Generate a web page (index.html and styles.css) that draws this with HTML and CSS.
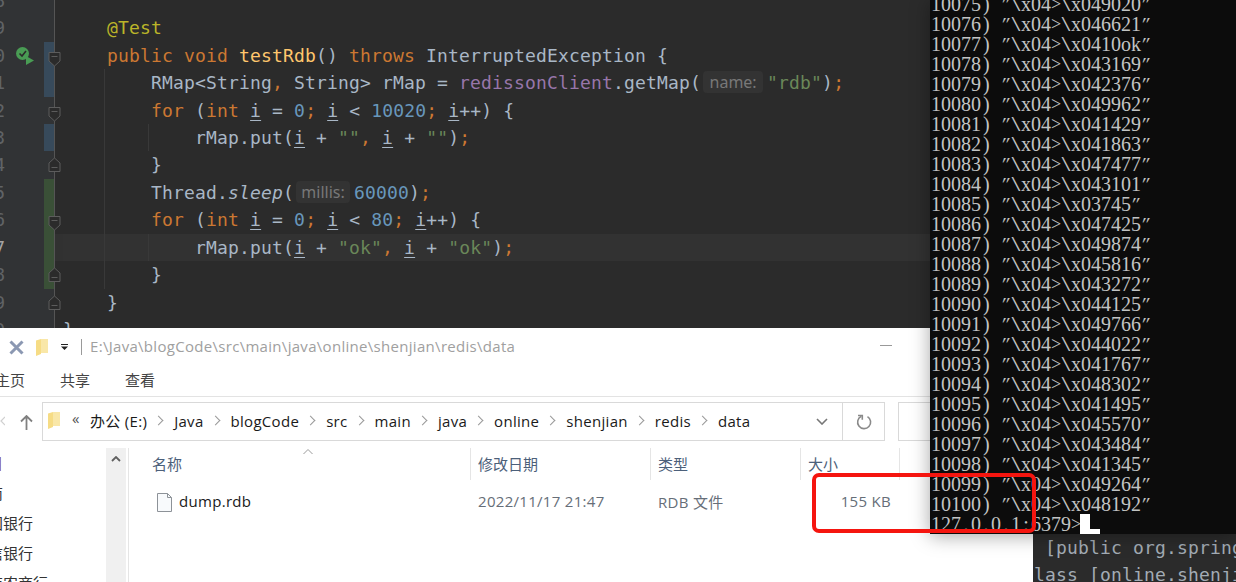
FILE: index.html
```html
<!DOCTYPE html>
<html lang="zh-CN">
<head>
<meta charset="utf-8">
<title>dump.rdb</title>
<link rel="stylesheet" href="styles.css">
</head>
<body>
<div class="desk">

<section class="win ide">
  <div class="row"><div class="gut"><span class="num">8</span></div><div class="gap"></div><code class="code"></code></div>
  <div class="row"><div class="gut"><span class="num">9</span></div><div class="gap"></div><code class="code">    <span class="a">@Test</span></code></div>
  <div class="row"><div class="gut blue"><span class="num">0</span>
      <svg class="run" viewBox="0 0 18 18"><circle cx="6.5" cy="6.5" r="6.5" fill="#499c54"/><path d="M3.5 6.5l2.5 2.5 4-5" fill="none" stroke="#2b2b2b" stroke-width="1.6"/><path d="M10 9l8 4.5-8 4.5z" fill="#499c54"/></svg>
      <svg class="fold fd" viewBox="0 0 13 15"><path d="M1 .5h11v8.500l-5.500 5-5.500-5z" fill="#2b2b2b" stroke="#5c5c5c"/><path d="M3.500 4.500h6" stroke="#5c5c5c"/></svg>
    </div><div class="gap"></div><code class="code">    <span class="k">public void</span> <span class="m">testRdb</span>() <span class="k">throws</span> InterruptedException {</code></div>
  <div class="row"><div class="gut blue"><span class="num">1</span></div><div class="gap"></div><code class="code g1">        RMap&lt;String<span class="k">,</span> String&gt; rMap = <span class="f">redissonClient</span>.getMap(<span class="hint hname">name:</span><span class="s">"rdb"</span>)<span class="k">;</span></code></div>
  <div class="row"><div class="gut"><span class="num">2</span>
      <svg class="fold fd" viewBox="0 0 13 15"><path d="M1 .5h11v8.500l-5.500 5-5.500-5z" fill="#2b2b2b" stroke="#5c5c5c"/><path d="M3.500 4.500h6" stroke="#5c5c5c"/></svg>
    </div><div class="gap"></div><code class="code g1">        <span class="k">for</span> (<span class="k">int</span> <u>i</u> = <span class="n">0</span><span class="k">;</span> <u>i</u> &lt; <span class="n">10020</span><span class="k">;</span> <u>i</u>++) {</code></div>
  <div class="row"><div class="gut blue"><span class="num">3</span></div><div class="gap"></div><code class="code g2">            rMap.put(<u>i</u> + <span class="s">""</span><span class="k">,</span> <u>i</u> + <span class="s">""</span>)<span class="k">;</span></code></div>
  <div class="row"><div class="gut"><span class="num">4</span>
      <svg class="fold fu" viewBox="0 0 13 15"><path d="M1 14.500h11v-8.500l-5.500-5-5.500 5z" fill="#2b2b2b" stroke="#5c5c5c"/><path d="M3.500 10.500h6" stroke="#5c5c5c"/></svg>
    </div><div class="gap"></div><code class="code g1">        }</code></div>
  <div class="row"><div class="gut green"><span class="num">5</span></div><div class="gap"></div><code class="code g1">        Thread.<em>sleep</em>(<span class="hint hmillis">millis:</span><span class="n">60000</span>)<span class="k">;</span></code></div>
  <div class="row"><div class="gut green"><span class="num">6</span>
      <svg class="fold fd" viewBox="0 0 13 15"><path d="M1 .5h11v8.500l-5.500 5-5.500-5z" fill="#2b2b2b" stroke="#5c5c5c"/><path d="M3.500 4.500h6" stroke="#5c5c5c"/></svg>
    </div><div class="gap"></div><code class="code g1">        <span class="k">for</span> (<span class="k">int</span> <u>i</u> = <span class="n">0</span><span class="k">;</span> <u>i</u> &lt; <span class="n">80</span><span class="k">;</span> <u>i</u>++) {</code></div>
  <div class="row"><div class="gut green"><span class="num cur">7</span></div><div class="gap gapcur"></div><code class="code g2 caret">            rMap.put(<u>i</u> + <span class="s">"ok"</span><span class="k">,</span> <u>i</u> + <span class="s">"ok"</span>)<span class="k">;</span></code></div>
  <div class="row"><div class="gut green"><span class="num">8</span>
      <svg class="fold fu" viewBox="0 0 13 15"><path d="M1 14.500h11v-8.500l-5.500-5-5.500 5z" fill="#2b2b2b" stroke="#5c5c5c"/><path d="M3.500 10.500h6" stroke="#5c5c5c"/></svg>
    </div><div class="gap"></div><code class="code g1">        }</code></div>
  <div class="row"><div class="gut"><span class="num">9</span>
      <svg class="fold fu" viewBox="0 0 13 15"><path d="M1 14.500h11v-8.500l-5.500-5-5.500 5z" fill="#2b2b2b" stroke="#5c5c5c"/><path d="M3.500 10.500h6" stroke="#5c5c5c"/></svg>
    </div><div class="gap"></div><code class="code">    }</code></div>
  <div class="row"><div class="gut"><span class="num">0</span></div><div class="gap"></div><code class="code">}</code></div>
</section>

<section class="win explorer">
  <header class="titlebar">
    <svg class="ic-x" viewBox="0 0 15 15"><path d="M1.500 1.500l12 12M13.500 1.500l-12 12" stroke="#8b98b2" stroke-width="3"/></svg>
    <svg class="ic-folder" viewBox="0 0 12 17"><path d="M0 1.500l5-1.500h7v14h-7v1l-5 2z" fill="#f6dc85"/><path d="M5 0v14h7v-14z" fill="#f9e7a8"/></svg>
    <svg class="ic-drop" viewBox="0 0 7 6"><path d="M0 0h7v1h-7zM0 2.500h7l-3.500 3.500z" fill="#222"/></svg>
    <span class="sep"></span>
    <span class="path">E:\Java\blogCode\src\main\java\online\shenjian\redis\data</span>
    <span class="min"></span>
  </header>
  <nav class="tabs"><span class="tab t1">主页</span><span class="tab">共享</span><span class="tab">查看</span></nav>
  <div class="addr-row">
    <svg class="ic-back" viewBox="0 0 5 10"><path d="M5 1l-4 4 4 4" fill="none" stroke="#d0d0d0" stroke-width="1.200"/></svg>
    <svg class="ic-up" viewBox="0 0 13 15"><path d="M6.500 15v-14M1 6.500l5.500-5.500 5.500 5.500" fill="none" stroke="#808080" stroke-width="1.800"/></svg>
    <div class="addr">
      <div class="crumbs">
        <svg class="ic-folder2" viewBox="0 0 12 17"><path d="M0 1.500l5-1.500h7v14h-7v1l-5 2z" fill="#f6dc85"/><path d="M5 0v14h7v-14z" fill="#f9e7a8"/></svg>
        <span class="more">«</span>
        <span class="c0">办公 (E:)</span><i class="cv"></i><span>Java</span><i class="cv"></i><span>blogCode</span><i class="cv"></i><span>src</span><i class="cv"></i><span>main</span><i class="cv"></i><span>java</span><i class="cv"></i><span>online</span><i class="cv"></i><span>shenjian</span><i class="cv"></i><span>redis</span><i class="cv"></i><span>data</span>
      </div>
      <svg class="ic-chev" viewBox="0 0 12 7"><path d="M1 1l5 5 5-5" fill="none" stroke="#777" stroke-width="1.600"/></svg>
      <div class="refresh"><svg viewBox="0 0 16 16" width="16" height="16"><path d="M5.300 2.300a6.500 6.500 0 1 0 6.200 .3" fill="none" stroke="#8a8a8a" stroke-width="1.600"/><path d="M2 1.500h4.300v4.300" fill="none" stroke="#8a8a8a" stroke-width="1.600"/></svg></div>
    </div>
    <div class="search"></div>
  </div>
  <div class="main">
    <aside class="side">
      <div class="tree"><div class="red">项目</div><div>指南</div><div>中国银行</div><div>中信银行</div><div>上海农商行</div></div>
      <div class="scroll"><svg viewBox="0 0 10 6" width="10" height="6"><path d="M1 5l4-4 4 4" fill="none" stroke="#606060" stroke-width="1.800"/></svg></div>
    </aside>
    <div class="list">
      <div class="th th1">名称<svg class="sort" viewBox="0 0 10 6"><path d="M.5 5l4.500-4.500 4.500 4.500" fill="none" stroke="#9a9a9a"/></svg></div>
      <div class="th">修改日期</div>
      <div class="th">类型</div>
      <div class="th">大小</div>
      <div class="td td1"><svg class="ic-file" viewBox="0 0 15 19"><path d="M.5.5h10l4 4v14h-14z" fill="#f8fafc" stroke="#8d9298"/><path d="M10.500.5v4h4" fill="none" stroke="#8d9298"/></svg><span>dump.rdb</span></div>
      <div class="td">2022/11/17 21:47</div>
      <div class="td">RDB 文件</div>
      <div class="td tr">155 KB</div>
    </div>
  </div>
</section>

<section class="win console">
  <code class="cline"> [public org.spring</code>
  <code class="cline">lass [online.shenji</code>
</section>

<section class="win term">
  <div class="r">10075<i class="p">)</i><i class="q">"</i><i class="b">\</i>x04<i class="g">&gt;</i><i class="b">\</i>x049020<i class="q">"</i></div>
  <div class="r">10076<i class="p">)</i><i class="q">"</i><i class="b">\</i>x04<i class="g">&gt;</i><i class="b">\</i>x046621<i class="q">"</i></div>
  <div class="r">10077<i class="p">)</i><i class="q">"</i><i class="b">\</i>x04<i class="g">&gt;</i><i class="b">\</i>x0410ok<i class="q">"</i></div>
  <div class="r">10078<i class="p">)</i><i class="q">"</i><i class="b">\</i>x04<i class="g">&gt;</i><i class="b">\</i>x043169<i class="q">"</i></div>
  <div class="r">10079<i class="p">)</i><i class="q">"</i><i class="b">\</i>x04<i class="g">&gt;</i><i class="b">\</i>x042376<i class="q">"</i></div>
  <div class="r">10080<i class="p">)</i><i class="q">"</i><i class="b">\</i>x04<i class="g">&gt;</i><i class="b">\</i>x049962<i class="q">"</i></div>
  <div class="r">10081<i class="p">)</i><i class="q">"</i><i class="b">\</i>x04<i class="g">&gt;</i><i class="b">\</i>x041429<i class="q">"</i></div>
  <div class="r">10082<i class="p">)</i><i class="q">"</i><i class="b">\</i>x04<i class="g">&gt;</i><i class="b">\</i>x041863<i class="q">"</i></div>
  <div class="r">10083<i class="p">)</i><i class="q">"</i><i class="b">\</i>x04<i class="g">&gt;</i><i class="b">\</i>x047477<i class="q">"</i></div>
  <div class="r">10084<i class="p">)</i><i class="q">"</i><i class="b">\</i>x04<i class="g">&gt;</i><i class="b">\</i>x043101<i class="q">"</i></div>
  <div class="r">10085<i class="p">)</i><i class="q">"</i><i class="b">\</i>x04<i class="g">&gt;</i><i class="b">\</i>x03745<i class="q">"</i></div>
  <div class="r">10086<i class="p">)</i><i class="q">"</i><i class="b">\</i>x04<i class="g">&gt;</i><i class="b">\</i>x047425<i class="q">"</i></div>
  <div class="r">10087<i class="p">)</i><i class="q">"</i><i class="b">\</i>x04<i class="g">&gt;</i><i class="b">\</i>x049874<i class="q">"</i></div>
  <div class="r">10088<i class="p">)</i><i class="q">"</i><i class="b">\</i>x04<i class="g">&gt;</i><i class="b">\</i>x045816<i class="q">"</i></div>
  <div class="r">10089<i class="p">)</i><i class="q">"</i><i class="b">\</i>x04<i class="g">&gt;</i><i class="b">\</i>x043272<i class="q">"</i></div>
  <div class="r">10090<i class="p">)</i><i class="q">"</i><i class="b">\</i>x04<i class="g">&gt;</i><i class="b">\</i>x044125<i class="q">"</i></div>
  <div class="r">10091<i class="p">)</i><i class="q">"</i><i class="b">\</i>x04<i class="g">&gt;</i><i class="b">\</i>x049766<i class="q">"</i></div>
  <div class="r">10092<i class="p">)</i><i class="q">"</i><i class="b">\</i>x04<i class="g">&gt;</i><i class="b">\</i>x044022<i class="q">"</i></div>
  <div class="r">10093<i class="p">)</i><i class="q">"</i><i class="b">\</i>x04<i class="g">&gt;</i><i class="b">\</i>x041767<i class="q">"</i></div>
  <div class="r">10094<i class="p">)</i><i class="q">"</i><i class="b">\</i>x04<i class="g">&gt;</i><i class="b">\</i>x048302<i class="q">"</i></div>
  <div class="r">10095<i class="p">)</i><i class="q">"</i><i class="b">\</i>x04<i class="g">&gt;</i><i class="b">\</i>x041495<i class="q">"</i></div>
  <div class="r">10096<i class="p">)</i><i class="q">"</i><i class="b">\</i>x04<i class="g">&gt;</i><i class="b">\</i>x045570<i class="q">"</i></div>
  <div class="r">10097<i class="p">)</i><i class="q">"</i><i class="b">\</i>x04<i class="g">&gt;</i><i class="b">\</i>x043484<i class="q">"</i></div>
  <div class="r">10098<i class="p">)</i><i class="q">"</i><i class="b">\</i>x04<i class="g">&gt;</i><i class="b">\</i>x041345<i class="q">"</i></div>
  <div class="r">10099<i class="p">)</i><i class="q">"</i><i class="b">\</i>x04<i class="g">&gt;</i><i class="b">\</i>x049264<i class="q">"</i></div>
  <div class="r">10100<i class="p">)</i><i class="q">"</i><i class="b">\</i>x04<i class="g">&gt;</i><i class="b">\</i>x048192<i class="q">"</i></div>
  <div class="r">127<i>.</i>0<i>.</i>0<i>.</i>1<i>:</i>6379<i class="g">&gt;</i><span class="cursor"></span></div>
</section>

<div class="mark"></div>
</div>
</body>
</html>
```
FILE: styles.css
```css
* { box-sizing: border-box; }
html, body { margin: 0; padding: 0; }
body { width: 1236px; height: 582px; overflow: hidden; background: #2b2b2b; }
.desk { position: relative; width: 1236px; height: 582px; overflow: hidden; }
.win { position: absolute; overflow: hidden; }

/* IDE */
.ide { left: 0; top: 0; width: 935px; height: 328px; background: #2b2b2b; padding-top: 0; }
.row { display: flex; height: 27.45px; margin-bottom: 0; }
.row:first-child { margin-top: -13.150px; }
.gut { position: relative; flex: none; width: 55px; height: 100%; background: #313335; border-right: 1px solid #555; display: flex; }
.blue::after, .green::after { content: ""; position: absolute; left: 44px; top: 0; width: 10px; height: 100%; }
.blue::after { background: #374a5b; }
.green::after { background: #3a5037; }
.num { width: 5px; overflow: hidden; display: flex; justify-content: flex-end; font: 18px/27.45px "DejaVu Sans Mono", monospace; color: #606366; }
.num.cur { color: #a4a3a3; }
.run { position: absolute; left: 16px; top: 5px; width: 18px; height: 18px; }
.fold { position: absolute; left: 48px; width: 13px; height: 15px; z-index: 2; }
.fd { top: 10px; }
.fu { top: 6px; }
.gap { flex: none; width: 8px; background: #2b2b2b; }
.gapcur { background: #313131; }
.code { flex: 1; min-width: 0; display: block; white-space: pre; font: 18px/27.45px "DejaVu Sans Mono", monospace; letter-spacing: .164px; color: #a9b7c6; background: #2b2b2b; }
.g1 { background-image: linear-gradient(#393939, #393939); background-size: 1px 100%; background-repeat: no-repeat; background-position: 41px 0; }
.g2 { background-image: linear-gradient(#393939, #393939), linear-gradient(#393939, #393939); background-size: 1px 100%, 1px 100%; background-repeat: no-repeat; background-position: 41px 0, 85px 0; }
.caret { background-color: #323232; }
.k { color: #cc7832; }
.n { color: #6897bb; }
.s { color: #6a8759; }
.a { color: #bbb529; }
.m { color: #ffc66d; }
.f { color: #9876aa; }
em { font-style: italic; }
u { text-decoration: underline; text-underline-offset: 3px; text-decoration-thickness: 1px; }
.hint { display: inline-block; height: 22px; margin: 0 4px 0 2px; border-radius: 4px; background: #333; color: #787878; font: 16px/22px "Noto Sans", sans-serif; letter-spacing: 0; text-align: center; vertical-align: 1px; }
.hname { width: 60px; }
.hmillis { width: 54px; }

/* Explorer */
.explorer { left: 0; top: 328px; width: 1034px; height: 254px; background: #fff; display: flex; flex-direction: column; font: 15px "Open Sans", "Noto Sans CJK SC", sans-serif; letter-spacing: .3px; color: #1a1a1a; }
.titlebar { flex: none; height: 38px; display: flex; align-items: center; padding-left: 9px; }
.ic-x { width: 15px; height: 15px; }
.ic-folder { width: 12px; height: 17px; margin-left: 12px; }
.ic-drop { width: 7px; height: 6px; margin-left: 13px; }
.sep { width: 1px; height: 16px; background: #9a9a9a; margin-left: 13px; }
.path { margin: -2px 0 0 8px; color: #a0a0a0; white-space: nowrap; }
.min { width: 12px; height: 1px; background: #999; margin: -4px 142px 0 auto; }
.tabs { flex: none; height: 31px; display: flex; align-items: center; border-bottom: 1px solid #e3e3e3; font-family: "Noto Sans CJK SC", sans-serif; letter-spacing: 0; color: #444; padding-bottom: 4px; }
.tab { width: 30px; margin-right: 35px; white-space: nowrap; }
.t1 { margin-left: -5px; }
.addr-row { flex: none; height: 51px; padding-top: 5px; display: flex; align-items: flex-start; }
.ic-back { width: 5px; height: 10px; margin-top: 14px; }
.ic-up { width: 13px; height: 15px; margin: 13px 9px 0 15px; }
.addr { flex: none; width: 843px; height: 39px; border: 1px solid #d9d9d9; display: flex; align-items: center; }
.crumbs { flex: 1; display: flex; align-items: center; gap: 11px; white-space: nowrap; padding: 0 0 2px 5px; }
.ic-folder2 { width: 12px; height: 17px; margin-right: 1px; }
.more { color: #555; width: 8px; margin-right: -1px; line-height: 1; margin-top: -4px; }
.cv { width: 5px; height: 9px; flex: none; position: relative; }
.cv::before { content: ""; position: absolute; left: -3px; top: 1px; width: 6px; height: 6px; border-top: 1.500px solid #999; border-right: 1.500px solid #999; transform: rotate(45deg); }
.c0 { font-family: "Open Sans", "Noto Sans CJK SC", sans-serif; }
.ic-chev { width: 12px; height: 7px; margin-right: 14px; }
.refresh { width: 42px; height: 37px; border-left: 1px solid #d9d9d9; display: flex; align-items: center; justify-content: center; }
.search { flex: 1; height: 39px; margin-left: 13px; border: 1px solid #d9d9d9; }
.main { flex: 1; min-height: 0; display: flex; }
.side { flex: none; width: 129px; border-right: 1px solid #e5e5e5; display: flex; overflow: hidden; }
.tree { flex: none; width: 106px; font: 15px/30px "Noto Sans CJK SC", sans-serif; letter-spacing: 0; white-space: nowrap; color: #333; text-indent: -27px; }
.tree .red { color: #7a2a2a; }
.scroll { flex: none; width: 20px; background: #f0f0f0; display: flex; justify-content: center; align-items: flex-start; padding-top: 8px; }
.list { flex: 1; display: grid; grid-template-columns: 341px 180px 150px 100px; grid-template-rows: 32px 44px; justify-content: start; align-content: start; }
.th { position: relative; padding-left: 7px; border-left: 1px solid #e5e5e5; color: #4c607a; font: 15px/32px "Noto Sans CJK SC", sans-serif; letter-spacing: 0; }
.th1 { border-left: 0; padding-left: 23px; }
.th:nth-child(4) { border-right: 1px solid #e5e5e5; }
.sort { position: absolute; left: 174px; top: 1px; width: 10px; height: 6px; }
.td { display: flex; align-items: center; padding: 0 0 2px 8px; color: #666e78; white-space: nowrap; }
.td1 { padding-left: 28px; color: #1a1a1a; gap: 7px; }
.tr { justify-content: flex-end; padding-right: 9px; }
.ic-file { width: 15px; height: 19px; margin-top: 2px; }

/* Console */
.console { left: 1033px; top: 534px; width: 203px; height: 48px; padding-left: 1px; background: #2b2b2b; }
.cline { display: block; height: 27px; white-space: pre; font: 18px/27px "DejaVu Sans Mono", monospace; letter-spacing: .164px; color: #a3acb5; }

/* Terminal */
.term { left: 930px; top: 0; width: 306px; height: 534px; padding-left: 1px; background: #0c0c0c; box-shadow: 0 2px 18px rgba(0,0,0,.35); display: flex; flex-direction: column; justify-content: flex-end; color: #c2c4c4; font: 20px/20px "Liberation Serif", serif; }
.r { flex: none; height: 20px; white-space: nowrap; display: flex; }
.r i { flex: none; display: block; width: 10px; text-align: center; font-style: normal; }
.r i.p { width: 20px; text-align: left; padding-left: 2px; }
.r i.q { font-style: italic; transform: translateX(-2px) skewX(-14deg); }
.r i.b { transform: scaleX(1.600); }
.r i.g { font-size: 18px; }
.cursor { width: 20px; height: 20px; margin-left: -1px; background: linear-gradient(#fff, #fff) 0 0/10px 100% no-repeat, linear-gradient(#fff, #fff) 0 100%/100% 5px no-repeat; }

/* Annotation */
.mark { position: absolute; left: 812px; top: 473px; width: 224px; height: 60px; border: 4px solid #f5150f; border-radius: 7px; }
```
